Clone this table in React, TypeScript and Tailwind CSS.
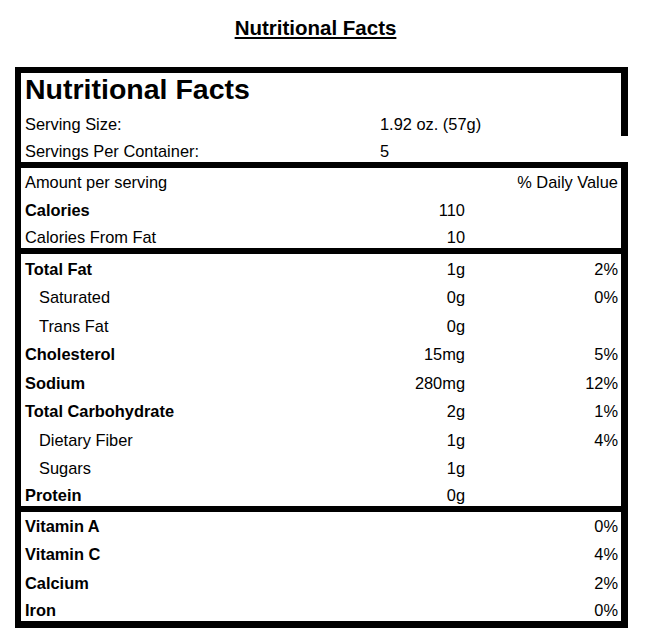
type Row = {
  label: string;
  amount?: string;
  daily?: string;
  bold?: boolean;
  indent?: boolean;
};

const nutrients: Row[] = [
  { label: "Total Fat", amount: "1g", daily: "2%", bold: true },
  { label: "Saturated", amount: "0g", daily: "0%", indent: true },
  { label: "Trans Fat", amount: "0g", indent: true },
  { label: "Cholesterol", amount: "15mg", daily: "5%", bold: true },
  { label: "Sodium", amount: "280mg", daily: "12%", bold: true },
  { label: "Total Carbohydrate", amount: "2g", daily: "1%", bold: true },
  { label: "Dietary Fiber", amount: "1g", daily: "4%", indent: true },
  { label: "Sugars", amount: "1g", indent: true },
  { label: "Protein", amount: "0g", bold: true },
];

const vitamins: Row[] = [
  { label: "Vitamin A", daily: "0%", bold: true },
  { label: "Vitamin C", daily: "4%", bold: true },
  { label: "Calcium", daily: "2%", bold: true },
  { label: "Iron", daily: "0%", bold: true },
];

function FactRow({ row, last }: { row: Row; last?: boolean }) {
  return (
    <div
      className={`flex pl-[4px] pr-[3px] leading-[19px] ${
        last ? "pt-[3px] pb-[1px]" : "py-[4.75px]"
      }`}
    >
      <span className={`flex-1 ${row.bold ? "font-bold" : ""} ${row.indent ? "pl-[14px]" : ""}`}>
        {row.label}
      </span>
      <span className="w-[100px] text-right">{row.amount}</span>
      <span className="w-[153px] text-right">{row.daily}</span>
    </div>
  );
}

export default function App() {
  return (
    <div className="min-h-[638px] bg-white text-black font-['Liberation_Sans',Arial,sans-serif] text-[16.4px]">
      <div className="w-[631px] pt-[16px] text-center">
        <h3 className="text-[20.5px] font-bold leading-[24px] underline">Nutritional Facts</h3>
      </div>

      <div className="ml-[15px] mt-[27px] w-[613px]">
        {/* header block: right edge stops after serving size */}
        <div className="border-l-[6px] border-t-[6px] border-black">
          <div className="border-r-[7px] border-black">
            <div className="pl-[4px] pb-[4px] text-[28.5px] font-bold leading-[33px]">Nutritional Facts</div>
            <div className="flex pl-[4px] pt-[4.75px] pb-[2.25px] leading-[19px]">
              <span className="w-[355px]">Serving Size:</span>
              <span>1.92 oz. (57g)</span>
            </div>
          </div>
          <div className="flex pl-[4px] pt-[6px] pb-[1px] leading-[19px]">
            <span className="w-[355px]">Servings Per Container:</span>
            <span>5</span>
          </div>
        </div>

        <div className="border-x-[6px] border-r-[7px] border-t-[6px] border-black">
          <div className="flex pl-[4px] pr-[3px] py-[4.75px] leading-[19px]">
            <span className="flex-1">Amount per serving</span>
            <span>% Daily Value</span>
          </div>
          <FactRow row={{ label: "Calories", amount: "110", bold: true }} />
          <FactRow row={{ label: "Calories From Fat", amount: "10" }} last />
        </div>

        <div className="border-l-[6px] border-r-[7px] border-t-[6px] border-black pt-[1px]">
          {nutrients.map((row, i) => (
            <FactRow key={row.label} row={row} last={i === nutrients.length - 1} />
          ))}
        </div>

        <div className="border-l-[6px] border-r-[7px] border-t-[6px] border-b-[7px] border-black">
          {vitamins.map((row, i) => (
            <FactRow key={row.label} row={row} last={i === vitamins.length - 1} />
          ))}
        </div>
      </div>
    </div>
  );
}
